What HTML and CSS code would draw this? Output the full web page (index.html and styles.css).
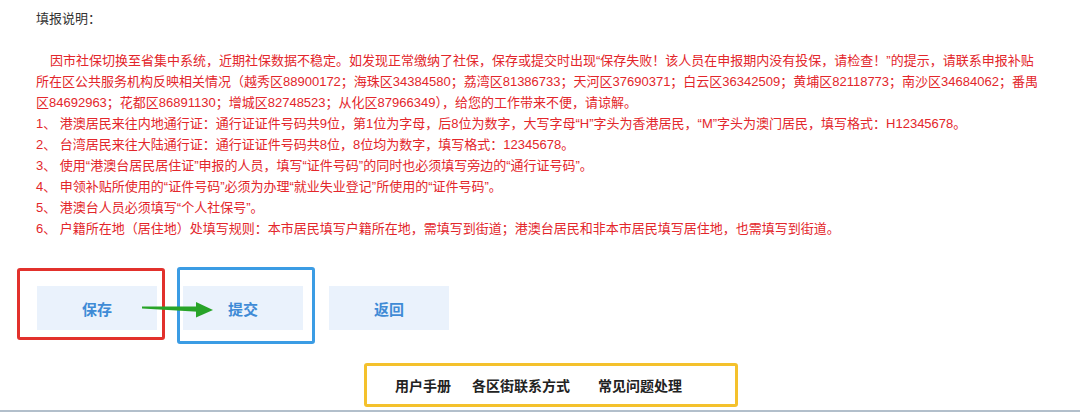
FILE: index.html
```html
<!DOCTYPE html>
<html lang="zh-CN">
<head>
<meta charset="utf-8">
<title>填报说明</title>
<link rel="stylesheet" href="styles.css">
</head>
<body>
<div class="page">
  <div class="notes">
    <div class="notes-title">填报说明：</div>
    <div class="notes-body">
      <p class="lead">因市社保切换至省集中系统，近期社保数据不稳定。如发现正常缴纳了社保，保存或提交时出现“保存失败！该人员在申报期内没有投保，请检查！”的提示，请联系申报补贴所在区公共服务机构反映相关情况（越秀区88900172；海珠区34384580；荔湾区81386733；天河区37690371；白云区36342509；黄埔区82118773；南沙区34684062；番禺区84692963；花都区86891130；增城区82748523；从化区87966349），给您的工作带来不便，请谅解。</p>
      <p>1、 港澳居民来往内地通行证：通行证证件号码共9位，第1位为字母，后8位为数字，大写字母“H”字头为香港居民，“M”字头为澳门居民，填写格式：H12345678。</p>
      <p>2、 台湾居民来往大陆通行证：通行证证件号码共8位，8位均为数字，填写格式：12345678。</p>
      <p>3、 使用“港澳台居民居住证”申报的人员，填写“证件号码”的同时也必须填写旁边的“通行证号码”。</p>
      <p>4、 申领补贴所使用的“证件号码”必须为办理“就业失业登记”所使用的“证件号码”。</p>
      <p>5、 港澳台人员必须填写“个人社保号”。</p>
      <p>6、 户籍所在地（居住地）处填写规则：本市居民填写户籍所在地，需填写到街道；港澳台居民和非本市居民填写居住地，也需填写到街道。</p>
    </div>
  </div>

  <div class="actions">
    <button class="btn" type="button">保存</button>
    <button class="btn" type="button">提交</button>
    <button class="btn" type="button">返回</button>
    <span class="mark mark-red"></span>
    <span class="mark mark-blue"></span>
    <svg class="arrow" width="76" height="24" viewBox="0 0 76 24" aria-hidden="true">
      <polygon points="2,8.6 58,8.4 58,13.8 2,10.6" fill="#28a428"/>
      <polygon points="56,4 73,12 56,19.5" fill="#28a428"/>
    </svg>
  </div>

  <div class="links">
    <a class="link" href="#">用户手册</a>
    <a class="link link-mid" href="#">各区街联系方式</a>
    <a class="link" href="#">常见问题处理</a>
  </div>
  <div class="bottom-rule"></div>
</div>
</body>
</html>
```

FILE: styles.css
```css
* { box-sizing: border-box; }

html, body {
  margin: 0;
  padding: 0;
  background: #ffffff;
}

body {
  font-family: "Liberation Sans", "Noto Sans CJK SC", sans-serif;
  font-size: 13px;
  line-height: 21px;
  color: #333333;
}

.page {
  width: 1080px;
  height: 412px;
  overflow: hidden;
}

.notes {
  padding: 8px 0 0 36px;
}

.notes-title {
  color: #333333;
}

.notes-body {
  margin-top: 21px;
  width: 1004px;
  color: #e3262b;
}

.notes-body p {
  margin: 0;
}

.notes-body .lead {
  text-indent: 14px;
}

.actions {
  position: relative;
  display: flex;
  gap: 26px;
  margin-top: 47px;
  padding-left: 37px;
  height: 44px;
}

.btn {
  width: 120px;
  height: 44px;
  border: none;
  background: #eaf2fc;
  color: #3f8bd6;
  font-family: "Liberation Sans", "Noto Sans CJK SC", sans-serif;
  font-size: 15px;
  font-weight: 700;
  padding: 0;
  cursor: pointer;
}

.mark {
  position: absolute;
  border-style: solid;
  border-width: 3px;
  border-radius: 3px;
  pointer-events: none;
}

.mark-red {
  left: 17px;
  top: -18px;
  width: 148px;
  height: 72px;
  border-color: #e2312c;
}

.mark-blue {
  left: 177px;
  top: -19px;
  width: 138px;
  height: 77px;
  border-color: #3b9ce4;
}

.arrow {
  position: absolute;
  left: 140px;
  top: 12px;
}

.links {
  display: flex;
  align-items: center;
  margin: 33px 0 0 364px;
  width: 374px;
  height: 44px;
  padding-left: 28px;
  border: 3px solid #f4c12c;
  border-radius: 3px;
}

.link {
  color: #222222;
  font-size: 14px;
  font-weight: 700;
  text-decoration: none;
  font-family: "Noto Sans CJK SC", sans-serif;
}

.link-mid {
  margin: 0 28px 0 21px;
}

.bottom-rule {
  margin-top: 3px;
  height: 2px;
  background: #b2bfcb;
}
```
